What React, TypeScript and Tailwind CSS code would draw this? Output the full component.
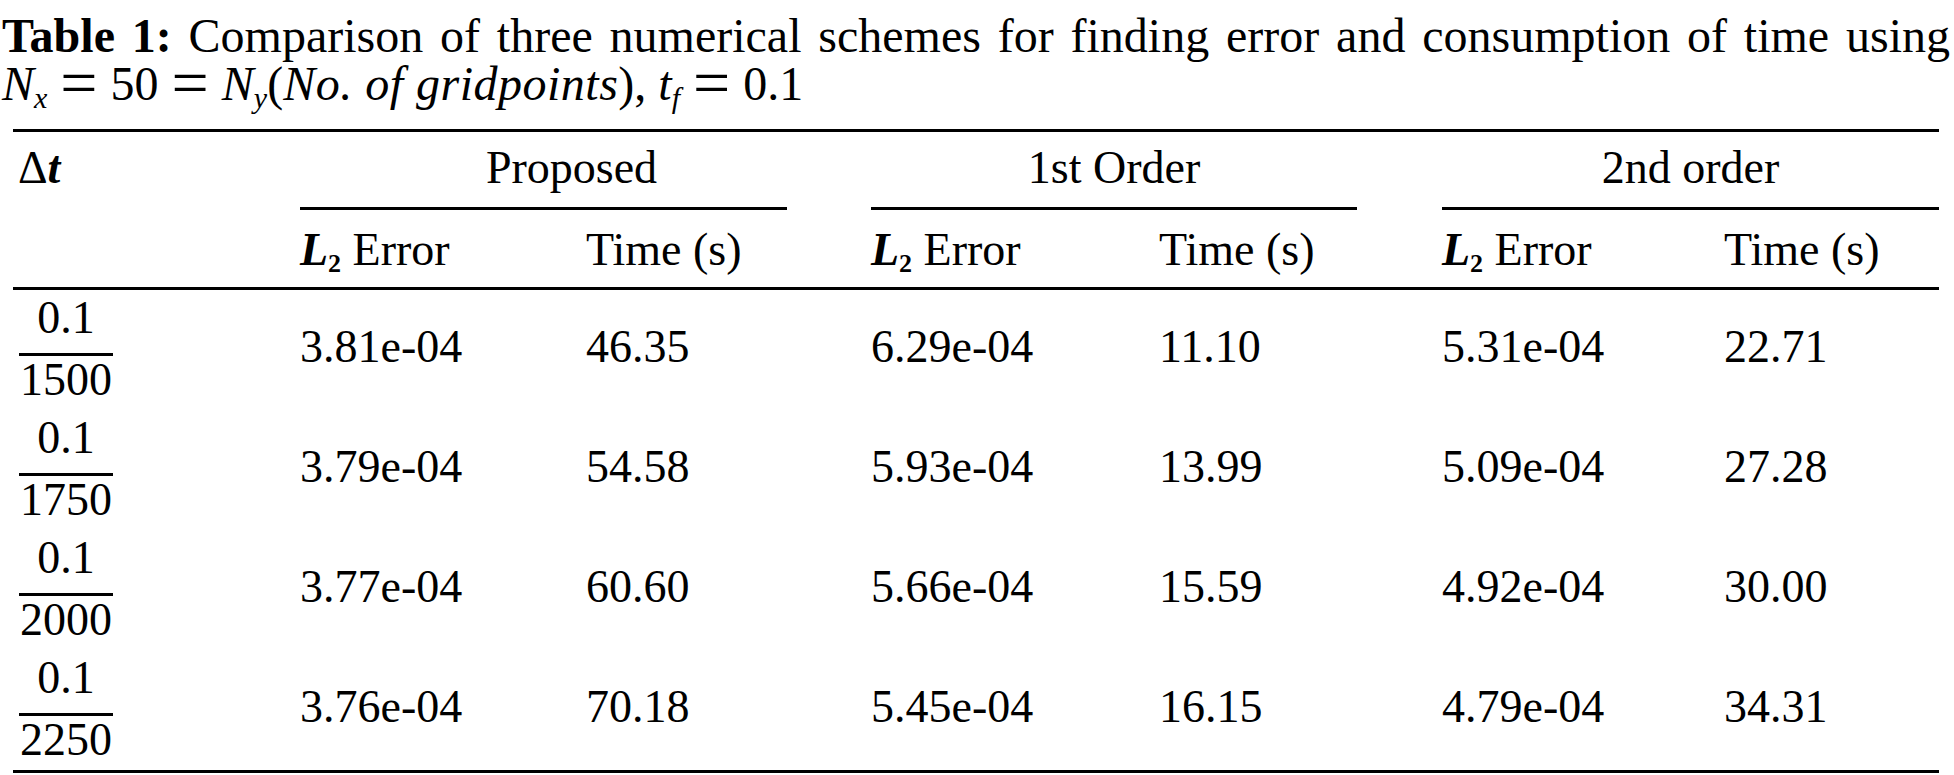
import React from "react";

const cols = "grid grid-cols-[287px_286px_285px_288px_283px_282px_215px]";

const rows = [
  { den: "1500", vals: ["3.81e-04", "46.35", "6.29e-04", "11.10", "5.31e-04", "22.71"] },
  { den: "1750", vals: ["3.79e-04", "54.58", "5.93e-04", "13.99", "5.09e-04", "27.28"] },
  { den: "2000", vals: ["3.77e-04", "60.60", "5.66e-04", "15.59", "4.92e-04", "30.00"] },
  { den: "2250", vals: ["3.76e-04", "70.18", "5.45e-04", "16.15", "4.79e-04", "34.31"] },
];

function Eq() {
  return <span className="relative top-[5px] mx-[13px] text-[66px] leading-[0]">=</span>;
}

function L2() {
  return (
    <>
      <b>
        <i>L</i>
      </b>
      <sub className="text-[26px] font-bold">2</sub> Error
    </>
  );
}

function Group({ label, gap, shift }: { label: string; gap: string; shift?: string }) {
  return (
    <div className="col-span-2 flex flex-col">
      <div className={`text-center ${gap} ${shift ?? ""}`}>{label}</div>
      <div className={`mt-[17px] h-[3px] bg-black ${gap}`} />
    </div>
  );
}

export default function App() {
  return (
    <div className="h-[775px] w-[1954px] overflow-hidden bg-white font-['Liberation_Serif',serif] text-black">
      <div className="pl-[2px] pr-[4px] pt-[12px] text-[48px] leading-[48px]">
        <p className="text-justify [text-align-last:justify]">
          <b>Table 1:</b> Comparison of three numerical schemes for finding error and consumption of time using
        </p>
        <p>
          <i>N</i>
          <sub className="text-[30px] italic">x</sub>
          <Eq />
          50
          <Eq />
          <i>N</i>
          <sub className="text-[30px] italic">y</sub>(<i className="tracking-[0.5px]">No. of gridpoints</i>),{" "}
          <i>t</i>
          <sub className="text-[30px] italic">f</sub>
          <Eq />
          0.1
        </p>
      </div>

      <div className="ml-[13px] mt-[21px] w-[1926px] text-[46px] leading-[45px]">
        <div className="h-[3px] bg-black" />

        <div className={`${cols} pt-[13px]`}>
          <div className="pl-[5px]">
            Δ
            <b>
              <i>t</i>
            </b>
          </div>
          <Group label="Proposed" gap="mr-[84px]" shift="pl-[56px]" />
          <Group label="1st Order" gap="mr-[85px]" />
          <Group label="2nd order" gap="" />
        </div>

        <div className={`${cols} pb-[15px] pt-[17px]`}>
          <div />
          <div>
            <L2 />
          </div>
          <div>Time (s)</div>
          <div>
            <L2 />
          </div>
          <div>Time (s)</div>
          <div>
            <L2 />
          </div>
          <div>Time (s)</div>
        </div>

        <div className="h-[3px] bg-black" />

        {rows.map((r) => (
          <div key={r.den} className={`${cols} h-[120px]`}>
            <div className="pl-[6px] pt-[5px]">
              <div className="flex w-[94px] flex-col items-center">
                <div className="mb-[13px]">0.1</div>
                <div className="h-[3px] w-full bg-black" />
                <div className="mt-[1px]">{r.den}</div>
              </div>
            </div>
            {r.vals.map((v, i) => (
              <div key={i} className="pt-[34px]">
                {v}
              </div>
            ))}
          </div>
        ))}

        <div className="h-[3px] bg-black" />
      </div>
    </div>
  );
}
